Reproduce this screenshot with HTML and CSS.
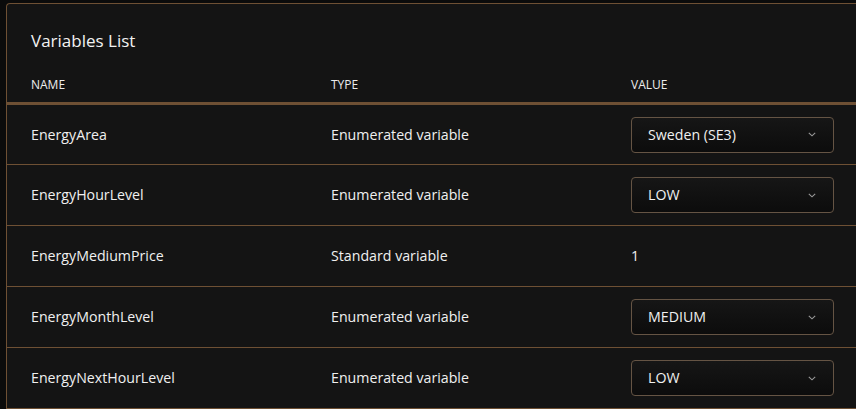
FILE: index.html
```html
<!DOCTYPE html>
<html>
<head>
<meta charset="utf-8">
<link rel="stylesheet" href="styles.css">
</head>
<body>
<div class="page">
  <div class="card">
    <h2 class="title">Variables List</h2>
    <table class="vars">
      <thead>
        <tr><th>NAME</th><th>TYPE</th><th>VALUE</th></tr>
      </thead>
      <tbody>
        <tr><td>EnergyArea</td><td>Enumerated variable</td><td><div class="select"><span>Sweden (SE3)</span><svg class="chev" width="8" height="5" viewBox="0 0 8 5"><path d="M0.8 0.8 L4 3.8 L7.2 0.8" fill="none" stroke="#9a9a9a" stroke-width="1.1"/></svg></div></td></tr>
        <tr><td>EnergyHourLevel</td><td>Enumerated variable</td><td><div class="select"><span>LOW</span><svg class="chev" width="8" height="5" viewBox="0 0 8 5"><path d="M0.8 0.8 L4 3.8 L7.2 0.8" fill="none" stroke="#9a9a9a" stroke-width="1.1"/></svg></div></td></tr>
        <tr><td>EnergyMediumPrice</td><td>Standard variable</td><td>1</td></tr>
        <tr><td>EnergyMonthLevel</td><td>Enumerated variable</td><td><div class="select"><span>MEDIUM</span><svg class="chev" width="8" height="5" viewBox="0 0 8 5"><path d="M0.8 0.8 L4 3.8 L7.2 0.8" fill="none" stroke="#9a9a9a" stroke-width="1.1"/></svg></div></td></tr>
        <tr><td>EnergyNextHourLevel</td><td>Enumerated variable</td><td><div class="select"><span>LOW</span><svg class="chev" width="8" height="5" viewBox="0 0 8 5"><path d="M0.8 0.8 L4 3.8 L7.2 0.8" fill="none" stroke="#9a9a9a" stroke-width="1.1"/></svg></div></td></tr>
      </tbody>
    </table>
  </div>
</div>
</body>
</html>
```

FILE: styles.css
```css
html, body {
  margin: 0;
  padding: 0;
  background: #0b0b0b;
  overflow: hidden;
  width: 856px;
  height: 409px;
}
.page {
  padding: 3px 0 0 6px;
  font-family: "Open Sans", "Noto Sans", sans-serif;
  color: #f0f0f0;
  overflow: hidden;
  height: 406px;
}
.card {
  width: 1100px;
  background: #141414;
  border-top: 1px solid #6e5034;
  border-left: 1px solid #6e5034;
  border-top-left-radius: 4px;
}
.title {
  margin: 0;
  padding: 25px 24px 0;
  font-size: 17px;
  line-height: 24px;
  font-weight: 400;
  color: #f2f2f2;
}
.vars {
  border-collapse: collapse;
  width: 100%;
}
.vars th {
  text-align: left;
  font-weight: 400;
  font-size: 12px;
  line-height: 16px;
  padding: 24px 24px 9px;
  border-bottom: 3px solid #6e5034;
  color: #ececec;
}
.vars th:nth-child(1), .vars th:nth-child(2) { width: 252px; }
.vars td {
  font-size: 14.2px;
  line-height: 20px;
  height: 61px;
  padding: 0 24px;
  box-sizing: border-box;
  border-bottom: 1px solid #6e5034;
  vertical-align: middle;
  color: #f0f0f0;
}
.select {
  width: 203px;
  height: 36px;
  box-sizing: border-box;
  border: 1px solid #655444;
  border-radius: 4px;
  background: linear-gradient(#161616, #0c0c0c);
  display: flex;
  align-items: center;
  justify-content: space-between;
  padding: 0 17px 0 16px;
}
.select span { line-height: 20px; }
.chev { display: block; }
```
